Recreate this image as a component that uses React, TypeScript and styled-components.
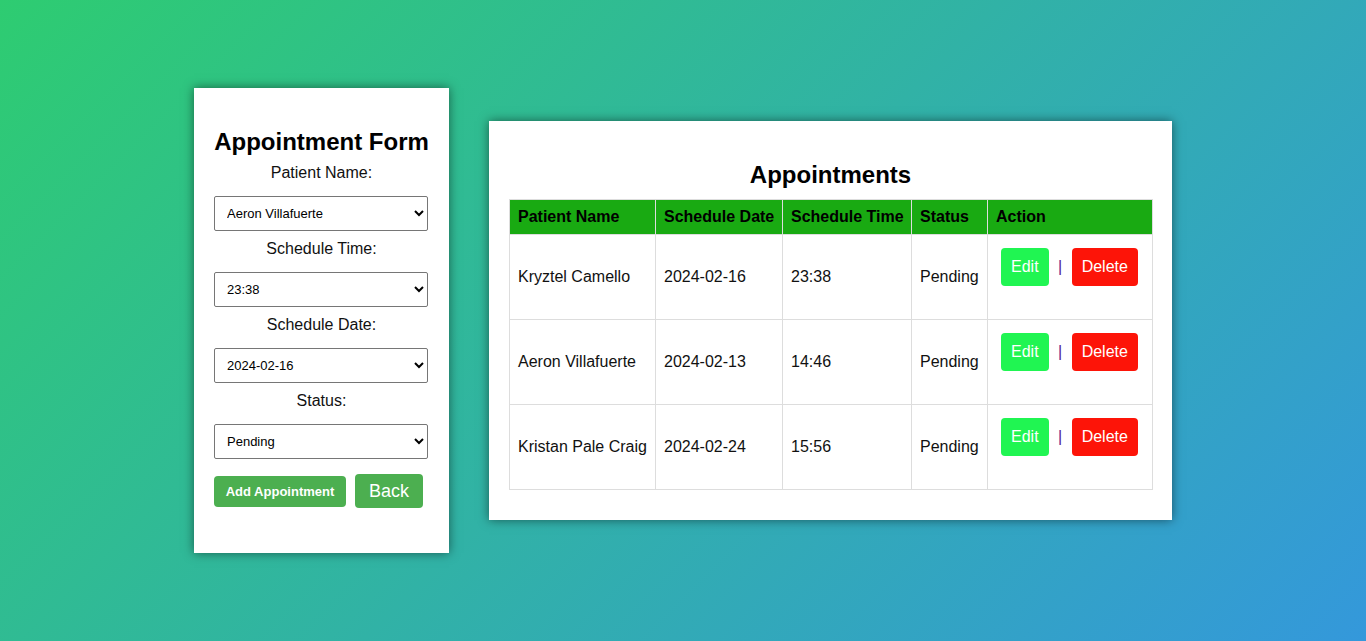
import React from "react";
import styled, {createGlobalStyle} from "styled-components";

const appointments = [
  {name: "Kryztel Camello", date: "2024-02-16", time: "23:38", status: "Pending"},
  {name: "Aeron Villafuerte", date: "2024-02-13", time: "14:46", status: "Pending"},
  {name: "Kristan Pale Craig", date: "2024-02-24", time: "15:56", status: "Pending"},
];

const columns = [
  {label: "Patient Name", width: 146},
  {label: "Schedule Date", width: 127},
  {label: "Schedule Time", width: 129},
  {label: "Status", width: 76},
  {label: "Action", width: 165},
];

export default function App() {
  return (
    <>
      <GlobalStyle/>
      <Page>
        <FormCard>
          <Title>Appointment Form</Title>

          <Label htmlFor="patient">Patient Name:</Label>
          <Select id="patient" defaultValue="Aeron Villafuerte">
            {appointments.map(a => (
              <option key={a.name} value={a.name}>{a.name}</option>
            ))}
          </Select>

          <Label htmlFor="time">Schedule Time:</Label>
          <Select id="time" defaultValue="23:38">
            {appointments.map(a => (
              <option key={a.time} value={a.time}>{a.time}</option>
            ))}
          </Select>

          <Label htmlFor="date">Schedule Date:</Label>
          <Select id="date" defaultValue="2024-02-16">
            {appointments.map(a => (
              <option key={a.date} value={a.date}>{a.date}</option>
            ))}
          </Select>

          <Label htmlFor="status">Status:</Label>
          <Select id="status" defaultValue="Pending">
            <option value="Pending">Pending</option>
            <option value="Approved">Approved</option>
            <option value="Cancelled">Cancelled</option>
          </Select>

          <ButtonRow>
            <SubmitBtn type="button">Add Appointment</SubmitBtn>
            <BackBtn type="button">Back</BackBtn>
          </ButtonRow>
        </FormCard>

        <TableCard>
          <TableTitle>Appointments</TableTitle>
          <Table>
            <colgroup>
              {columns.map(c => <col key={c.label} style={{width: c.width}}/>)}
            </colgroup>
            <thead>
              <tr>
                {columns.map(c => <Th key={c.label}>{c.label}</Th>)}
              </tr>
            </thead>
            <tbody>
              {appointments.map(a => (
                <tr key={a.name}>
                  <Td>{a.name}</Td>
                  <Td>{a.date}</Td>
                  <Td>{a.time}</Td>
                  <Td>{a.status}</Td>
                  <ActionTd>
                    <ActionWrap>
                      <ActionBtn $color="#20f552">Edit</ActionBtn>
                      {" "}<Sep>|</Sep>{" "}
                      <ActionBtn $color="#fd1408">Delete</ActionBtn>
                    </ActionWrap>
                  </ActionTd>
                </tr>
              ))}
            </tbody>
          </Table>
        </TableCard>
      </Page>
    </>
  )
}

const GlobalStyle = createGlobalStyle`
  html, body {
    margin: 0;
    padding: 0;
  }
  body {
    font-family: "Liberation Sans", Arial, sans-serif;
  }
  * {
    box-sizing: border-box;
  }
`

const Page = styled.div`
  height: 100vh;
  display: flex;
  align-items: center;
  justify-content: center;
  gap: 40px;
  background: linear-gradient(135deg, #2ecc71, #3498db);
`

const Card = styled.div`
  background-color: #fff;
  padding: 20px;
  box-shadow: 0 0 10px rgba(0, 0, 0, 0.5);
`

const FormCard = styled(Card)`
  width: 255px;
  text-align: center;
`

const Title = styled.h2`
  margin: 20px 0 8px;
  font-size: 24px;
  line-height: 28px;
  font-weight: bold;
  color: #000;
`

const Label = styled.label`
  display: block;
  font-size: 16px;
  line-height: 18px;
  color: #111;
  margin-bottom: 14px;
`

const Select = styled.select`
  display: block;
  width: 214px;
  height: 35px;
  padding: 0 8px;
  margin-bottom: 9px;
  font-family: "Liberation Sans", Arial, sans-serif;
  font-size: 13px;
  color: #000;
  background-color: #fff;
  border: 1px solid #767676;
  border-radius: 2px;
`

const ButtonRow = styled.div`
  display: flex;
  align-items: center;
  gap: 9px;
  margin-top: 15px;
  margin-bottom: 25px;
`

const GreenBtn = styled.button`
  background-color: #4caf50;
  color: #fff;
  border: none;
  border-radius: 4px;
  cursor: pointer;
  white-space: nowrap;
  font-family: "Liberation Sans", Arial, sans-serif;
`

const SubmitBtn = styled(GreenBtn)`
  width: 132px;
  height: 31px;
  padding: 0;
  font-size: 13px;
  font-weight: bold;
`

const BackBtn = styled(GreenBtn)`
  height: 34px;
  padding: 0 14px;
  font-size: 18px;
`

const TableCard = styled(Card)`
  width: 683px;
`

const TableTitle = styled(Title)`
  text-align: center;
  margin: 20px 0 10px;
`

const Table = styled.table`
  width: 643px;
  border-collapse: collapse;
  table-layout: fixed;
  margin-bottom: 10px;
  font-size: 16px;
`

const Th = styled.th`
  background-color: #19aa12;
  color: #000;
  text-align: left;
  font-weight: bold;
  padding: 8px;
  line-height: 18px;
  border: 1px solid #ddd;
  white-space: nowrap;
`

const Td = styled.td`
  padding: 8px;
  line-height: 18px;
  border: 1px solid #ddd;
  color: #111;
  vertical-align: middle;
  white-space: nowrap;
`

const ActionTd = styled(Td)`
  vertical-align: top;
`

const ActionWrap = styled.div`
  padding-bottom: 20px;
`

const ActionBtn = styled.button<{ $color: string }>`
  display: inline-block;
  vertical-align: middle;
  margin: 5px;
  padding: 10px 10px;
  font-family: "Liberation Sans", Arial, sans-serif;
  font-size: 16px;
  line-height: 18px;
  color: #fff;
  background-color: ${props => props.$color};
  border: none;
  border-radius: 4px;
  cursor: pointer;
`

const Sep = styled.span`
  color: #551a8b;
  vertical-align: middle;
`
